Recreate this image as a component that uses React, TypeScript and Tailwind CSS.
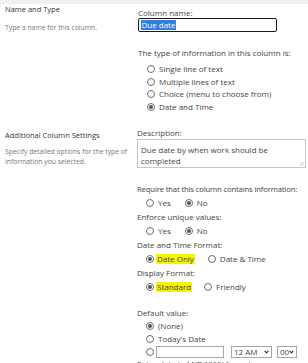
import React from "react";

const Radio = ({ checked = false }: { checked?: boolean }) => (
  <span className="inline-flex items-center justify-center w-[8px] h-[8px] rounded-full border border-[#6e6e6e] bg-white shrink-0">
    {checked && <span className="w-[4px] h-[4px] rounded-full bg-[#555]" />}
  </span>
);

const RadioRow = ({ label, checked = false, h = "h-[12.7px]" }: { label: string; checked?: boolean; h?: string }) => (
  <div className={`flex items-center pl-[9px] gap-[4px] ${h}`}>
    <Radio checked={checked} />
    <span>{label}</span>
  </div>
);

export default function App() {
  return (
    <div
      className="w-[308px] h-[363px] overflow-hidden bg-white text-[#444] text-[8px] leading-none whitespace-nowrap"
      style={{ fontFamily: '"Open Sans", "Noto Sans", sans-serif' }}
    >
      <div className="h-[4px] bg-[#f0f0f0]" />

      {/* Section 1 */}
      <div className="flex">
        <div className="w-[133px] shrink-0 pl-[5px]">
          <div className="h-[12px] flex items-center text-[#333] text-[7.5px]">Name and Type</div>
          <div className="mt-[6px] h-[12px] flex items-center text-[#777] text-[6.8px]">Type a name for this column.</div>
        </div>
        <div className="flex-1 min-w-0 pl-[5px] pt-[4px] pb-[7px]">
          <div className="h-[10px] flex items-center">Column name:</div>
          <div className="w-[139px] h-[14px] border-[1.5px] border-[#1a1a1a] rounded-[2px] flex items-center pl-[2px]">
            <span className="bg-[#2f7ee0] text-white px-[0.5px] leading-[10px]">Due date</span>
          </div>
          <div className="mt-[15px] h-[12px] flex items-center">The type of information in this column is:</div>
          <div className="mt-[3.5px]">
            <RadioRow label="Single line of text" />
            <RadioRow label="Multiple lines of text" />
            <RadioRow label="Choice (menu to choose from)" />
            <RadioRow label="Date and Time" checked />
          </div>
        </div>
      </div>

      {/* Section 2 */}
      <div className="flex">
        <div className="w-[133px] shrink-0 pl-[5px] pt-[9px]">
          <div className="h-[12px] flex items-center text-[#333] text-[7.5px]">Additional Column Settings</div>
          <div className="mt-[6px] text-[#777] text-[6.8px] leading-[10px]">
            Specify detailed options for the type of
            <br />
            information you selected.
          </div>
        </div>
        <div className="flex-1 min-w-0 pl-[4px] pt-[7px]">
          <div className="h-[12px] flex items-center">Description:</div>
          <div className="relative w-[169px] h-[29px] border border-[#c8c8c8] pl-[3px] pt-[4px] leading-[11px]">
            Due date by when work should be
            <br />
            completed
            <svg className="absolute right-[1px] bottom-[1px]" width="5" height="5" viewBox="0 0 5 5">
              <line x1="4.5" y1="1" x2="1" y2="4.5" stroke="#999" strokeWidth="0.7" />
              <line x1="4.5" y1="3" x2="3" y2="4.5" stroke="#999" strokeWidth="0.7" />
            </svg>
          </div>

          <div className="mt-[15px] h-[13px] flex items-center text-[7.7px] tracking-[-0.15px]">Require that this column contains information:</div>
          <div className="h-[14px] flex items-center pl-[9px]">
            <Radio />
            <span className="ml-[4px]">Yes</span>
            <span className="ml-[14px] flex"><Radio checked /></span>
            <span className="ml-[4px]">No</span>
          </div>
          <div className="h-[14px] flex items-center">Enforce unique values:</div>
          <div className="h-[14px] flex items-center pl-[9px]">
            <Radio />
            <span className="ml-[4px]">Yes</span>
            <span className="ml-[14px] flex"><Radio checked /></span>
            <span className="ml-[4px]">No</span>
          </div>
          <div className="h-[13px] flex items-center">Date and Time Format:</div>
          <div className="h-[15px] flex items-center pl-[9px]">
            <Radio checked />
            <span className="ml-[2px] bg-[#f8f500] px-[1px] h-[10px] flex items-center">Date Only</span>
            <span className="ml-[13px] flex"><Radio /></span>
            <span className="ml-[4px]">Date &amp; Time</span>
          </div>
          <div className="h-[14px] flex items-center">Display Format:</div>
          <div className="h-[14px] flex items-center pl-[9px]">
            <Radio checked />
            <span className="ml-[2px] bg-[#f8f500] px-[1px] h-[10px] flex items-center">Standard</span>
            <span className="ml-[12px] flex"><Radio /></span>
            <span className="ml-[4px]">Friendly</span>
          </div>

          <div className="mt-[12px] h-[13px] flex items-center">Default value:</div>
          <RadioRow label="(None)" checked h="h-[13px]" />
          <RadioRow label="Today's Date" h="h-[13px]" />
          <div className="h-[13px] flex items-center pl-[9px]">
            <Radio />
            <span className="ml-[2px] w-[68px] h-[12px] border border-[#a6a6a6]" />
            <span className="ml-[7px] w-[41px] h-[12px] border border-[#a6a6a6] flex items-center justify-between px-[2px]">
              <span>12 AM</span>
              <svg width="5" height="4" viewBox="0 0 5 4"><path d="M0.6 0.8 L2.5 2.9 L4.4 0.8" fill="none" stroke="#333" strokeWidth="1.1" /></svg>
            </span>
            <span className="ml-[5px] w-[20px] h-[12px] border border-[#a6a6a6] flex items-center justify-between px-[2px]">
              <span>00</span>
              <svg width="5" height="4" viewBox="0 0 5 4"><path d="M0.6 0.8 L2.5 2.9 L4.4 0.8" fill="none" stroke="#333" strokeWidth="1.1" /></svg>
            </span>
          </div>
          <div className="h-[12px] flex items-center">Enter date in M/D/YYYY format.</div>
        </div>
      </div>
    </div>
  );
}
